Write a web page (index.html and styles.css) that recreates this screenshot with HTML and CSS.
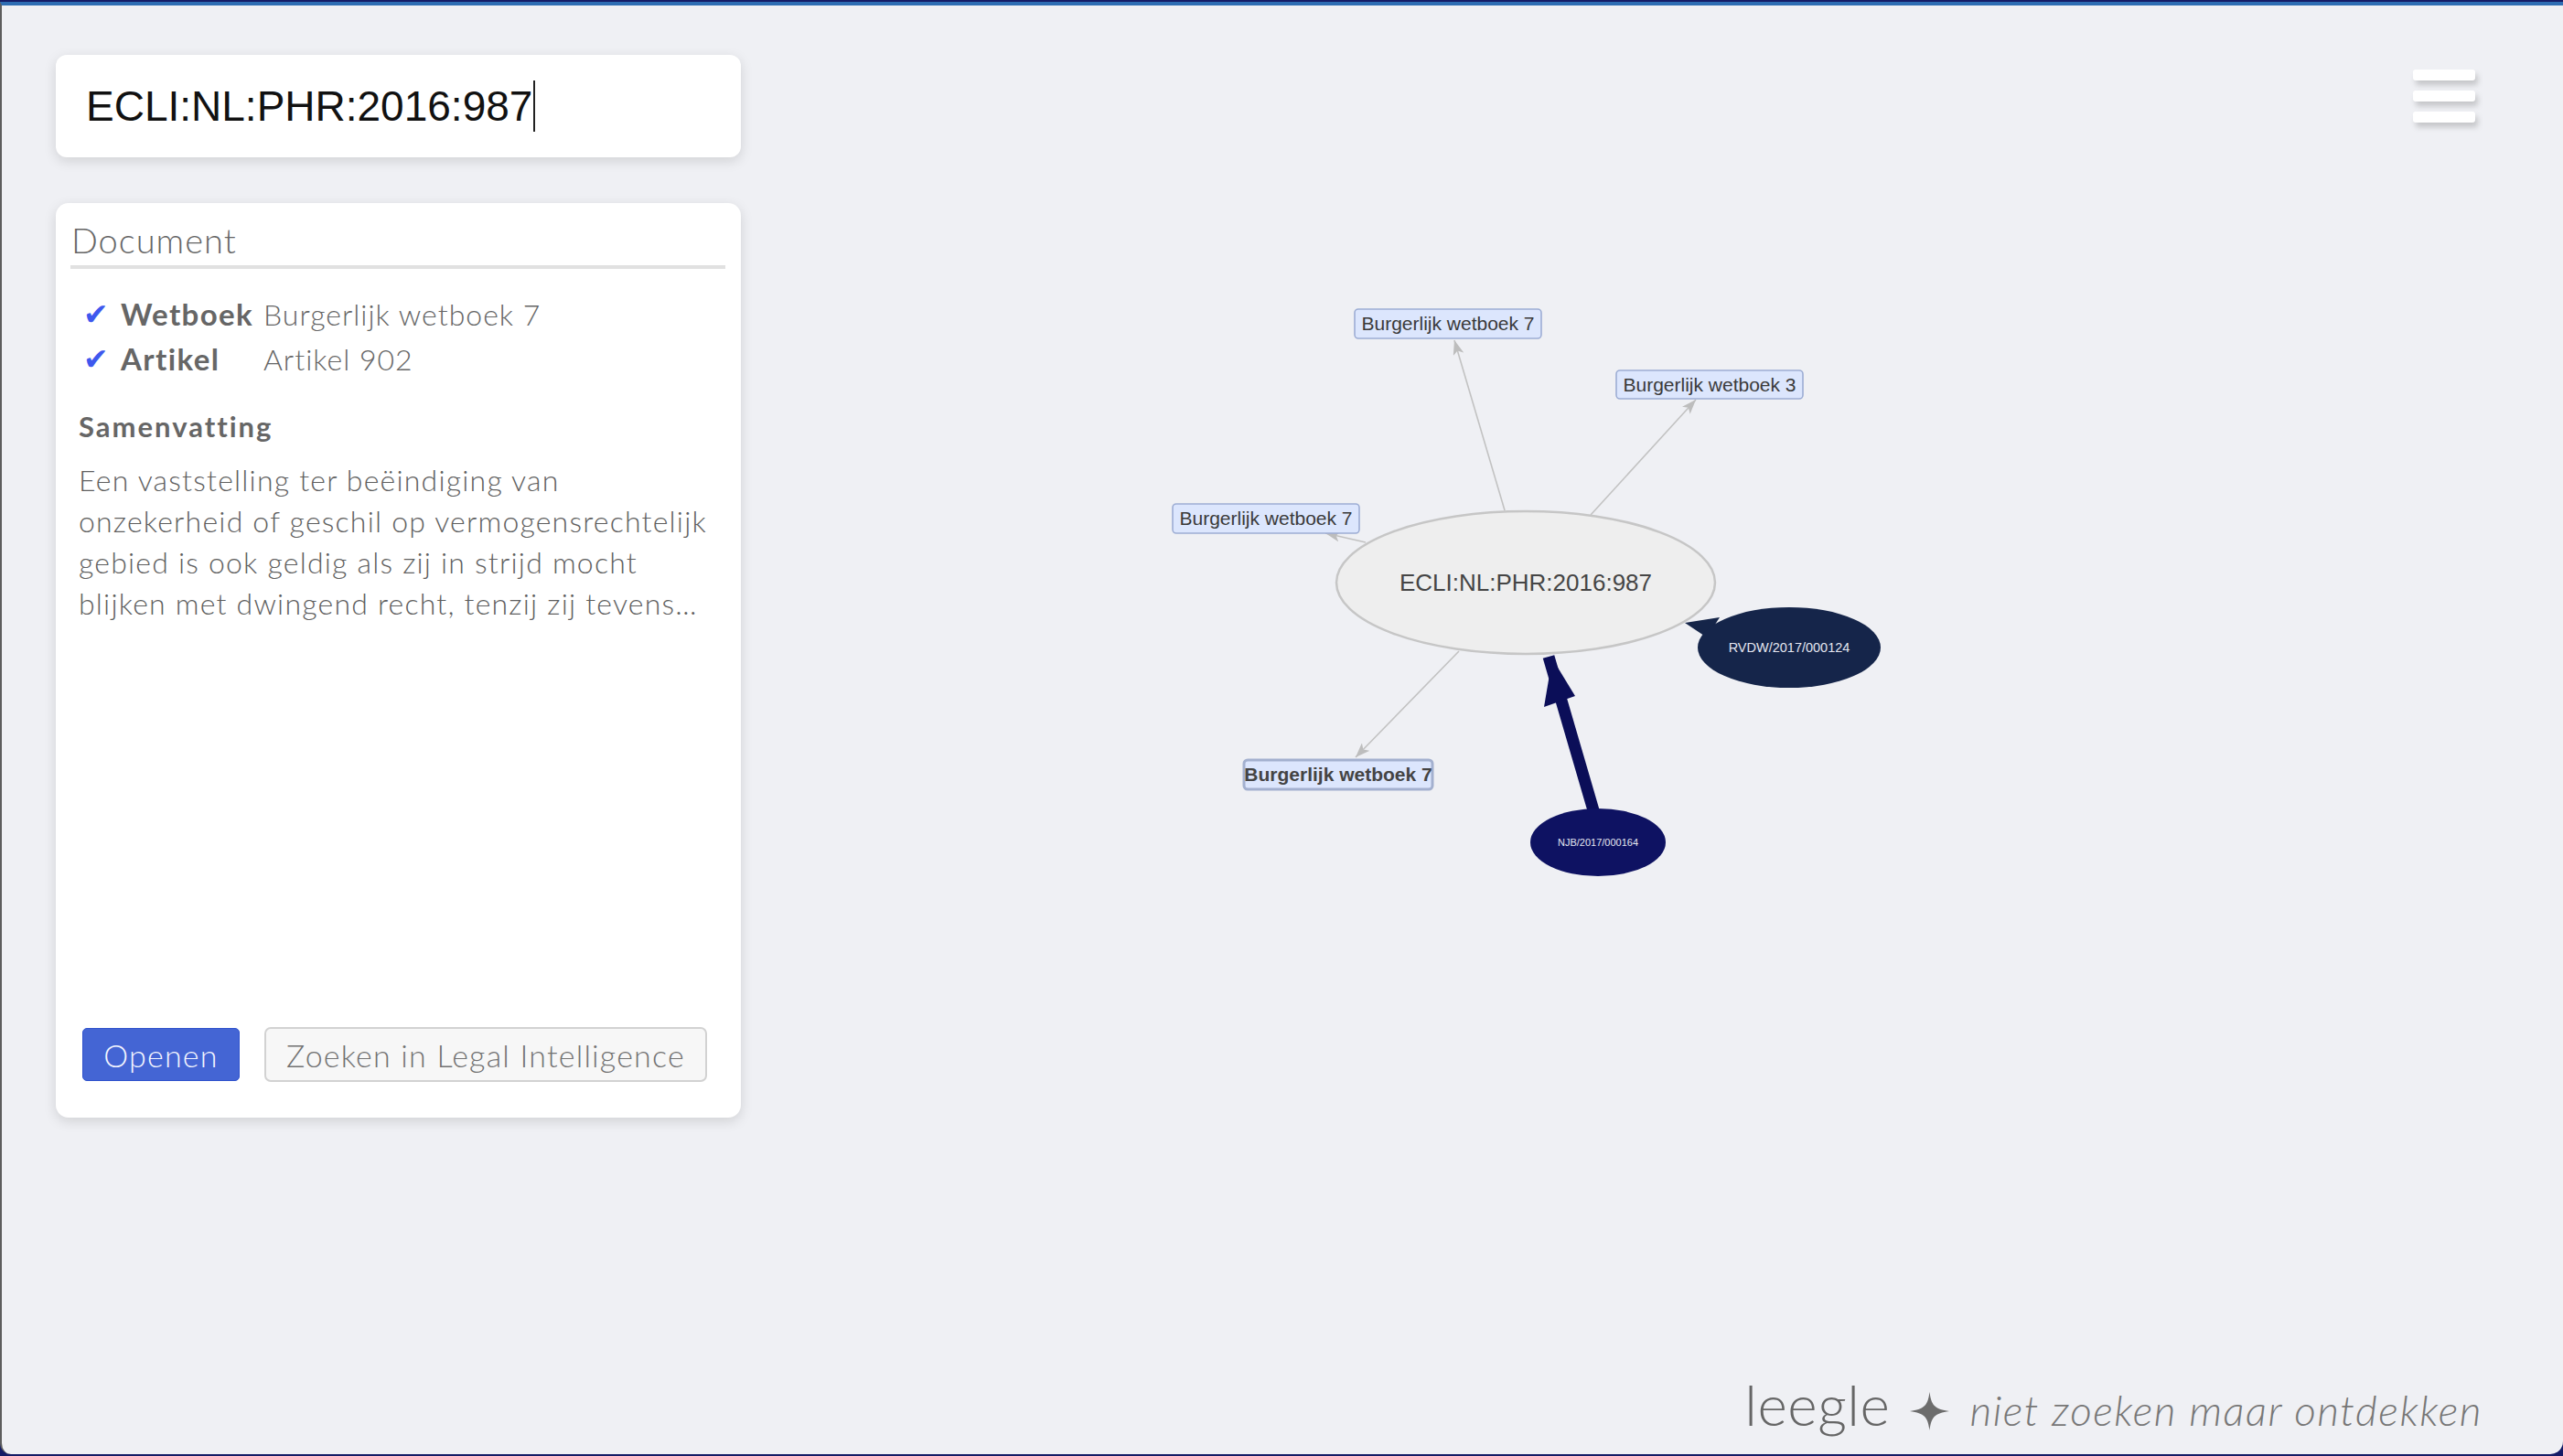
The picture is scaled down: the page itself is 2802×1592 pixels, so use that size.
FILE: index.html
```html
<!DOCTYPE html>
<html lang="nl">
<head>
<meta charset="utf-8">
<title>leegle</title>
<link rel="stylesheet" href="styles.css">
</head>
<body>
<div class="window">
  <svg class="graph" width="2800" height="1584" viewBox="2 6 2800 1584" xmlns="http://www.w3.org/2000/svg">
    <defs>
      <marker id="arr" markerUnits="userSpaceOnUse" markerWidth="16" markerHeight="12" refX="16" refY="6" orient="auto">
        <path d="M0 0 L16 6 L0 12 L4 6 Z" fill="#bdbdbd"/>
      </marker>
    </defs>
    <g class="edges">
      <line x1="1645" y1="558" x2="1590" y2="372" marker-end="url(#arr)"/>
      <line x1="1739" y1="563" x2="1854" y2="437" marker-end="url(#arr)"/>
      <line x1="1493" y1="593" x2="1449" y2="583" marker-end="url(#arr)"/>
      <line x1="1595" y1="712" x2="1482" y2="828" marker-end="url(#arr)"/>
    </g>
    <line class="heavy" x1="1742" y1="886" x2="1693" y2="718"/>
    <polygon class="heavy-head" points="1688,773 1722,761 1697,720"/>
    <polygon class="rvdw-edge" points="1842,681 1880,675 1866,697"/>

    <ellipse class="center" cx="1668" cy="637" rx="207" ry="78"/>
    <text class="center-label" x="1668" y="646">ECLI:NL:PHR:2016:987</text>

    <ellipse class="rvdw" cx="1956" cy="708" rx="100" ry="44"/>
    <text class="small-label" x="1956" y="713">RVDW/2017/000124</text>

    <ellipse class="njb" cx="1747" cy="921" rx="74" ry="37"/>
    <text class="tiny-label" x="1747" y="925">NJB/2017/000164</text>

    <rect class="box" x="1481" y="338" width="204" height="32" rx="4"/>
    <text class="box-label" x="1583" y="361">Burgerlijk wetboek 7</text>

    <rect class="box" x="1767" y="405" width="204" height="31" rx="4"/>
    <text class="box-label" x="1869" y="428">Burgerlijk wetboek 3</text>

    <rect class="box" x="1282" y="551" width="204" height="32" rx="4"/>
    <text class="box-label" x="1384" y="574">Burgerlijk wetboek 7</text>

    <rect class="box box-active" x="1360" y="831" width="206" height="32" rx="4"/>
    <text class="box-label box-label-bold" x="1463" y="854">Burgerlijk wetboek 7</text>
  </svg>

  <aside class="sidebar">
    <div class="search">
      <span class="search-text">ECLI:NL:PHR:2016:987</span>
    </div>
    <section class="card">
      <h2 class="card-title">Document</h2>
      <div class="fields">
        <span class="check">✔</span><span class="label">Wetboek</span><span class="value">Burgerlijk wetboek 7</span>
        <span class="check">✔</span><span class="label">Artikel</span><span class="value">Artikel 902</span>
      </div>
      <h3 class="summary-title">Samenvatting</h3>
      <p class="summary">Een vaststelling ter beëindiging van<br>onzekerheid of geschil op vermogensrechtelijk<br>gebied is ook geldig als zij in strijd mocht<br>blijken met dwingend recht, tenzij zij tevens…</p>
      <div class="actions">
        <button class="btn btn-primary">Openen</button>
        <button class="btn btn-secondary">Zoeken in Legal Intelligence</button>
      </div>
    </section>
  </aside>

  <main class="main">
    <div class="menu">
      <span class="bar"></span>
      <span class="bar"></span>
      <span class="bar"></span>
    </div>
    <footer class="footer">
      <span class="brand">leegle</span>
      <svg class="star" width="43" height="42" viewBox="0 0 43 42" xmlns="http://www.w3.org/2000/svg">
        <path d="M21.5 0 C23.5 15 27 18.5 43 21 C27 23.5 23.5 27 21.5 42 C19.5 27 16 23.5 0 21 C16 18.5 19.5 15 21.5 0 Z" fill="#6c6c6c"/>
      </svg>
      <span class="tagline">niet zoeken maar ontdekken</span>
    </footer>
  </main>
</div>
</body>
</html>
```

FILE: styles.css
```css
html, body {
  margin: 0;
  height: 1592px;
  overflow: hidden;
}
body {
  background: #151c66;
  padding-top: 2px;
  box-sizing: border-box;
  font-family: "Lato", "Open Sans", sans-serif;
}
.window {
  position: relative;
  height: 1588px;
  box-sizing: border-box;
  background: #eff0f4;
  border-top: 4px solid #2e6db3;
  border-left: 2px solid #5d5d5d;
  border-bottom-left-radius: 12px;
  border-bottom-right-radius: 14px;
  display: flex;
  overflow: hidden;
}
.graph {
  position: absolute;
  left: 0;
  top: 0;
  z-index: 0;
}
.edges line {
  stroke: #c2c2c2;
  stroke-width: 1.6;
}
.heavy {
  stroke: #0b0e58;
  stroke-width: 13;
}
.heavy-head { fill: #0b0e58; }
.rvdw-edge { fill: #152549; }
.center {
  fill: #eeeeee;
  stroke: #c6c6c6;
  stroke-width: 2.5;
}
.rvdw { fill: #15254a; }
.njb { fill: #0e1262; }
.center-label {
  font-family: "Liberation Sans", Arial, sans-serif;
  font-size: 26px;
  fill: #454545;
  text-anchor: middle;
}
.small-label {
  font-family: "Liberation Sans", Arial, sans-serif;
  font-size: 14.5px;
  fill: #e4e6f0;
  text-anchor: middle;
}
.tiny-label {
  font-family: "Liberation Sans", Arial, sans-serif;
  font-size: 11px;
  fill: #e4e6f0;
  text-anchor: middle;
}
.box {
  fill: #dce6fd;
  stroke: #9dadd4;
  stroke-width: 1.6;
}
.box-active {
  stroke-width: 3;
  stroke: #a3b0cf;
}
.box-label {
  font-family: "Liberation Sans", Arial, sans-serif;
  font-size: 21px;
  fill: #3a3a3a;
  text-anchor: middle;
}
.box-label-bold {
  font-weight: bold;
  fill: #444;
}

/* Sidebar */
.sidebar {
  position: relative;
  z-index: 1;
  width: 749px;
  flex: none;
  padding: 54px 0 0 59px;
  display: flex;
  flex-direction: column;
  gap: 50px;
}
.search {
  height: 112px;
  background: #fff;
  border-radius: 12px;
  box-shadow: 0 4px 14px rgba(0, 0, 0, 0.13);
  display: flex;
  align-items: center;
  padding-left: 33px;
}
.search-text {
  font-family: "Liberation Sans", Arial, sans-serif;
  font-size: 46px;
  line-height: 56px;
  color: #111;
  border-right: 2px solid #222;
  padding-right: 1px;
}
.card {
  height: 1000px;
  box-sizing: border-box;
  background: #fff;
  border-radius: 14px;
  box-shadow: 0 4px 14px rgba(0, 0, 0, 0.13);
  padding: 17px 17px 39px 16px;
  display: flex;
  flex-direction: column;
}
.card-title {
  margin: 0;
  font-weight: 300;
  font-size: 38px;
  line-height: 46px;
  letter-spacing: 1px;
  color: #666;
  padding: 0 0 5px 1px;
  border-bottom: 4px solid #e1e1e1;
}
.fields {
  margin: 25px 0 0 14px;
  display: grid;
  grid-template-columns: 41px 156px auto;
  font-size: 32px;
  line-height: 49px;
  color: #666;
}
.check {
  font-family: "DejaVu Sans", sans-serif;
  color: #3e58ee;
  font-size: 33px;
  line-height: 49px;
}
.label {
  font-weight: 700;
  font-size: 33px;
  letter-spacing: 1.4px;
  color: #666;
}
.value {
  font-weight: 300;
  letter-spacing: 1px;
}
.summary-title {
  margin: 29px 0 0 9px;
  font-weight: 700;
  font-size: 31px;
  line-height: 40px;
  letter-spacing: 2px;
  color: #666;
}
.summary {
  margin: 16px 0 0 9px;
  font-weight: 300;
  font-size: 32px;
  line-height: 45px;
  letter-spacing: 1.2px;
  color: #5f5f5f;
  white-space: nowrap;
}
.actions {
  margin: auto 0 0 13px;
  display: flex;
  align-items: center;
  gap: 27px;
  height: 60px;
}
.btn {
  font-family: "Lato", sans-serif;
  font-weight: 300;
  font-size: 34px;
  letter-spacing: 1.2px;
  padding: 0;
  box-sizing: border-box;
  cursor: pointer;
}
.btn-primary {
  width: 172px;
  height: 58px;
  background: #4465d4;
  border: 1px solid #2f52cc;
  border-radius: 5px;
  color: #f4f6ff;
}
.btn-secondary {
  width: 484px;
  height: 60px;
  background: #f7f7f7;
  border: 2px solid #d2d2d2;
  border-radius: 7px;
  color: #727272;
}

/* Main column */
.main {
  position: relative;
  z-index: 1;
  flex: 1;
  display: flex;
  flex-direction: column;
  align-items: flex-end;
  justify-content: space-between;
  padding: 70px 88px 13px 0;
}
.menu {
  display: flex;
  flex-direction: column;
  gap: 11px;
  margin-right: 8px;
}
.bar {
  display: block;
  width: 68px;
  height: 12px;
  background: #fff;
  border-radius: 3px;
  box-shadow: 3px 5px 6px rgba(0, 0, 0, 0.18);
}
.footer {
  display: flex;
  align-items: baseline;
  line-height: 70px;
  color: #6c6c6c;
}
.brand {
  font-weight: 300;
  font-size: 62px;
  letter-spacing: 0.5px;
  color: #666;
}
.star {
  margin: 0 22px 0 22px;
  align-self: center;
  position: relative;
  top: 4px;
}
.tagline {
  font-weight: 300;
  font-style: italic;
  font-size: 46px;
  letter-spacing: 1.5px;
  color: #777;
}
```
